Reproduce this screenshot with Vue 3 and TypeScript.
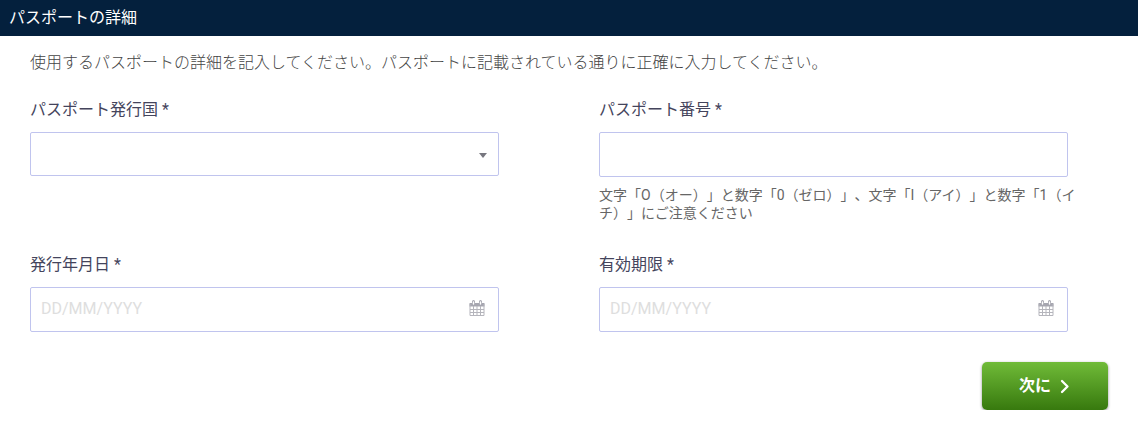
<script setup lang="ts">
import { ref } from 'vue'

const country = ref('')
const passportNumber = ref('')
const dates = ref([
  { id: 'issue-date', label: '発行年月日 *', value: '' },
  { id: 'expiry-date', label: '有効期限 *', value: '' },
])
</script>

<template>
  <form class="passport" @submit.prevent>
    <h2 class="title">パスポートの詳細</h2>
    <p class="intro">使用するパスポートの詳細を記入してください。パスポートに記載されている通りに正確に入力してください。</p>

    <div class="fields">
      <div class="field">
        <label for="country">パスポート発行国 *</label>
        <div class="control">
          <select id="country" v-model="country" class="select">
            <option value=""></option>
            <option value="JP">日本</option>
          </select>
          <svg class="arrow" width="8" height="5" viewBox="0 0 8 5" aria-hidden="true">
            <path d="M0 0H8L4 5Z" fill="#77777f" />
          </svg>
        </div>
      </div>

      <div class="field">
        <label for="number">パスポート番号 *</label>
        <div class="control">
          <input id="number" v-model="passportNumber" type="text" aria-describedby="number-hint" />
        </div>
        <p id="number-hint" class="hint">文字「O（オー）」と数字「0（ゼロ）」、文字「I（アイ）」と数字「1（イチ）」にご注意ください</p>
      </div>

      <div v-for="date in dates" :key="date.id" class="field">
        <label :for="date.id">{{ date.label }}</label>
        <div class="control">
          <input :id="date.id" v-model="date.value" type="text" placeholder="DD/MM/YYYY" />
          <svg class="calendar" width="16" height="17" viewBox="0 0 16 17" aria-hidden="true">
            <path d="M0.5 3H15.5V6.5H0.5Z" fill="#a6a6b0" />
            <path d="M1 4V15.5H15V4M1 9.5H15M1 12.5H15M4.5 6V15M8 6V15M11.5 6V15" fill="none" stroke="#b5b5bc" />
            <path d="M4.5 4V1.5M11.5 4V1.5" stroke="#a6a6b0" stroke-width="3" stroke-linecap="round" />
            <path d="M4.5 4V2M11.5 4V2" stroke="#fff" stroke-width="1.4" stroke-linecap="round" />
          </svg>
        </div>
      </div>
    </div>

    <div class="actions">
      <button type="submit" class="next">
        <span>次に</span>
        <svg width="12" height="16" viewBox="0 0 12 16" aria-hidden="true">
          <path d="M3 3L8.5 8.5L3 14" fill="none" stroke="#fff" stroke-width="2.3" stroke-linecap="round" stroke-linejoin="round" />
        </svg>
      </button>
    </div>
  </form>
</template>

<style>
body {
  margin: 0;
  background: #fff;
}
</style>

<style scoped>
.passport {
  font-family: Roboto, "Noto Sans CJK JP", sans-serif;
  font-size: 16px;
  font-weight: 300;
  line-height: 24px;
  color: #444;
  text-spacing-trim: space-all;
}

.title {
  margin: 0;
  padding: 6px 9px;
  background: #04203d;
  color: #fff;
  font-size: 16px;
  font-weight: 400;
  line-height: 24px;
}

.intro {
  margin: 15px 30px 0;
}

.fields {
  display: grid;
  grid-template-columns: 1fr 1fr;
  row-gap: 31px;
  padding-top: 23px;
}

.field {
  padding: 0 70px 0 30px;
}

.field label {
  display: block;
  margin-bottom: 10px;
  color: #44445c;
  font-weight: 400;
}

.control {
  position: relative;
  display: flex;
}

.control input,
.control select {
  box-sizing: border-box;
  width: 100%;
  height: 45px;
  margin: 0;
  padding: 0 40px 2px 10px;
  border: 1px solid #c0c4ee;
  border-radius: 2px;
  background: #fff;
  color: #3c3c55;
  font: inherit;
  font-weight: 400;
  appearance: none;
}

.control .select {
  height: 44px;
}

.control input::placeholder {
  color: #dedede;
  opacity: 1;
}

.arrow {
  position: absolute;
  top: 21px;
  right: 12px;
  pointer-events: none;
}

.calendar {
  position: absolute;
  top: 13px;
  right: 14px;
  pointer-events: none;
}

.hint {
  margin: 9px -10px 0 0;
  color: #666;
  font-size: 14px;
  font-weight: 400;
  line-height: 18px;
}

.actions {
  display: flex;
  justify-content: flex-end;
  padding: 30px 30px 0;
}

.next {
  display: flex;
  align-items: center;
  justify-content: center;
  gap: 8px;
  min-width: 126px;
  height: 48px;
  padding: 0 36px;
  border: 0;
  border-radius: 5px;
  background: linear-gradient(#70bb38, #37790e);
  box-shadow: 0 1px 3px rgba(0, 0, 0, 0.45);
  color: #fff;
  font: inherit;
  font-weight: 700;
}
</style>
